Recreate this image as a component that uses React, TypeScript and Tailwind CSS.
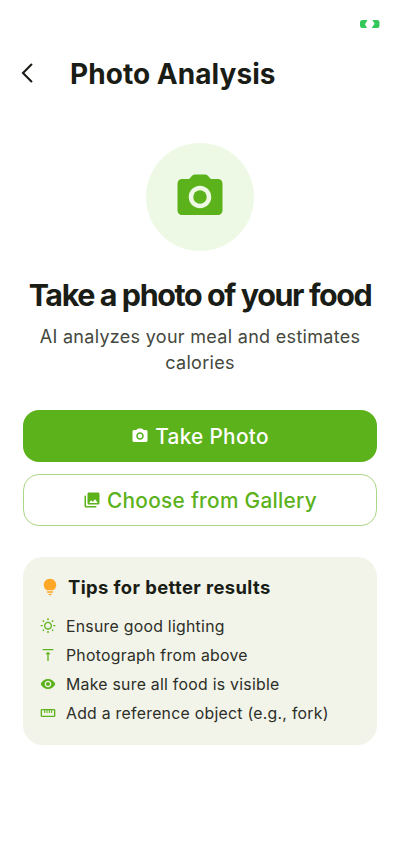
import type { ComponentType, ReactNode } from "react";
import { MdOutlineWbSunny, MdVerticalAlignTop, MdVisibility } from "react-icons/md";

const tips: { icon: ComponentType<{ className: string }>; label: string }[] = [
  { icon: MdOutlineWbSunny, label: "Ensure good lighting" },
  { icon: MdVerticalAlignTop, label: "Photograph from above" },
  { icon: MdVisibility, label: "Make sure all food is visible" },
  { icon: RulerIcon, label: "Add a reference object (e.g., fork)" },
];

function Icon({ className, children }: { className: string; children: ReactNode }) {
  return (
    <svg viewBox="0 0 24 24" fill="currentColor" className={`shrink-0 ${className}`}>
      {children}
    </svg>
  );
}

function CameraIcon({ className }: { className: string }) {
  return (
    <Icon className={className}>
      <circle cx="12" cy="12" r="3" />
      <path d="M20 4h-3.17l-1.24-1.35A1.99 1.99 0 0 0 14.12 2H9.88c-.56 0-1.1.24-1.48.65L7.17 4H4c-1.1 0-2 .9-2 2v12c0 1.1.9 2 2 2h16c1.1 0 2-.9 2-2V6c0-1.1-.9-2-2-2zm-8 13c-2.76 0-5-2.24-5-5s2.24-5 5-5 5 2.24 5 5-2.24 5-5 5z" />
    </Icon>
  );
}

function GalleryIcon({ className }: { className: string }) {
  return (
    <Icon className={className}>
      <path d="M22 16V4c0-1.1-.9-2-2-2H8c-1.1 0-2 .9-2 2v12c0 1.1.9 2 2 2h12c1.1 0 2-.9 2-2zm-10.6-3.47l1.63 2.18 2.58-3.22a.5.5 0 0 1 .78 0l2.96 3.7c.26.33.03.81-.39.81H9a.5.5 0 0 1-.4-.8l2-2.67c.2-.26.6-.26.8 0zM2 7v13c0 1.1.9 2 2 2h13c.55 0 1-.45 1-1s-.45-1-1-1H5c-.55 0-1-.45-1-1V7c0-.55-.45-1-1-1s-1 .45-1 1z" />
    </Icon>
  );
}

function BulbIcon({ className }: { className: string }) {
  return (
    <Icon className={className}>
      <path d="M12 22c1.1 0 2-.9 2-2h-4c0 1.1.9 2 2 2zM9 19h6c.55 0 1-.45 1-1s-.45-1-1-1H9c-.55 0-1 .45-1 1s.45 1 1 1zM12 2C7.86 2 4.5 5.36 4.5 9.5c0 3.82 2.66 5.86 3.77 6.5h7.46c1.11-.64 3.77-2.68 3.77-6.5C19.5 5.36 16.14 2 12 2z" />
    </Icon>
  );
}

function RulerIcon({ className }: { className: string }) {
  return (
    <Icon className={className}>
      <g fill="none" stroke="currentColor" strokeWidth="2">
        <rect x="2" y="7" width="20" height="10" rx="1" />
        <path d="M7 7v5M10.5 7v5M14 7v5M17.5 7v5" strokeWidth="1.6" />
      </g>
    </Icon>
  );
}

export default function App() {
  return (
    <div className="h-[865px] w-[400px] overflow-hidden bg-white font-['Inter',sans-serif] text-[#1a1c16]">
      {/* Status bar */}
      <div className="flex h-12 justify-end pr-5 pt-5">
        <svg viewBox="0 0 20 8" className="h-2 w-5 text-[#34c759]" fill="currentColor">
          <path d="M2.5 0H7.6L5 4.2 7 8H2.5Q0 8 0 5.5V2.5Q0 0 2.5 0z" />
          <path d="M12.4 0H17Q19.5 0 19.5 2.5v3Q19.5 8 17 8H11.6L14.6 3.8z" />
        </svg>
      </div>

      {/* App bar */}
      <header className="flex h-[50px] items-center pl-[21px]">
        <svg viewBox="0 0 12 20" className="h-5 w-3" fill="none" stroke="currentColor" strokeWidth="2.1" strokeLinecap="round">
          <path d="M10.4 1.6L2 10l8.4 8.4" />
        </svg>
        <h1 className="ml-[37px] pt-px text-[28px] font-bold leading-none tracking-[0.05px]">Photo Analysis</h1>
      </header>

      <main className="flex flex-col px-[23px] pt-[45px]">
        <div className="flex size-[108px] items-center justify-center self-center rounded-full bg-[#edf9e5]">
          <CameraIcon className="size-[54px] text-[#5cb21b]" />
        </div>

        <h2 className="mt-6 whitespace-nowrap text-center text-[30.5px] font-bold leading-[40px] tracking-[-1.42px]">
          Take a photo of your food
        </h2>
        <p className="mt-[9px] text-center text-[18px] leading-[26px] tracking-[0.3px] text-[#44483d]">
          AI analyzes your meal and estimates calories
        </p>

        <button className="mt-[34px] flex h-[52px] items-center justify-center gap-[6px] rounded-[16px] bg-[#5cb21b] text-white">
          <CameraIcon className="size-[18px]" />
          <span className="pt-0.5 text-[20.8px] font-medium tracking-[0.3px]">Take Photo</span>
        </button>
        <button className="mt-3 flex h-[52px] items-center justify-center gap-[6px] rounded-[16px] border border-[#aad888] text-[#5cb21b]">
          <GalleryIcon className="size-[18px]" />
          <span className="pt-0.5 text-[20.8px] font-medium tracking-[0.3px]">Choose from Gallery</span>
        </button>

        <section className="mt-[31px] h-[188px] rounded-[20px] bg-[#f2f4e9] pl-[17px] pt-[18px]">
          <div className="flex h-6 items-center gap-2">
            <BulbIcon className="size-5 text-[#ffa726]" />
            <h3 className="pt-0.5 text-[18.4px] font-bold tracking-[0.4px]">Tips for better results</h3>
          </div>
          <ul className="mt-3">
            {tips.map(({ icon: TipIcon, label }) => (
              <li key={label} className="flex h-[29px] items-center gap-[10px]">
                <TipIcon className="size-4 shrink-0 text-[#5cb21b]" />
                <span className="pt-[3px] text-[15.8px] tracking-[0.27px] text-[#2c2e27]">{label}</span>
              </li>
            ))}
          </ul>
        </section>
      </main>
    </div>
  );
}
